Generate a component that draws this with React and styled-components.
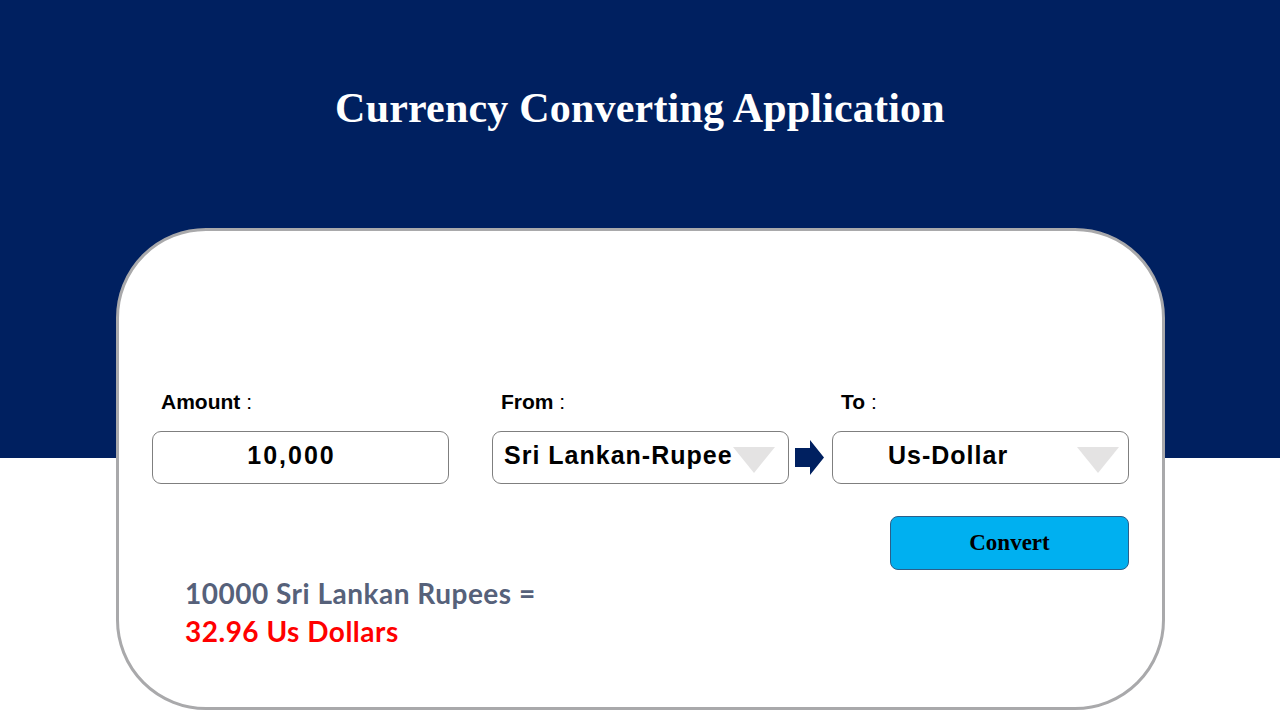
import React from "react";
import styled, { createGlobalStyle } from "styled-components";

const GlobalStyle = createGlobalStyle`
  html, body { margin: 0; padding: 0; }
  body { font-family: "Liberation Sans", Arial, sans-serif; background: #ffffff; }
  * { box-sizing: border-box; }
`;

const Page = styled.div`
  width: 1280px;
  height: 720px;
  overflow: hidden;
  background: linear-gradient(to bottom, #002060 0, #002060 458px, #ffffff 458px);
  display: flex;
  flex-direction: column;
`;

const Header = styled.header`
  height: 228px;
  display: flex;
  justify-content: center;
  padding-top: 84px;
`;

const Title = styled.h1`
  margin: 0;
  font-family: "Liberation Serif", "Times New Roman", serif;
  font-weight: 700;
  font-size: 42px;
  line-height: 48px;
  color: #ffffff;
  letter-spacing: 0.2px;
`;

const Card = styled.main`
  margin-left: 116px;
  width: 1049px;
  height: 482px;
  background: #ffffff;
  border: 3px solid #a9a9ab;
  border-radius: 90px;
  padding: 159px 33px 0 33px;
  display: flex;
  flex-direction: column;
`;

const Form = styled.div`
  display: grid;
  grid-template-columns: 297px 43px 297px 43px 297px;
  grid-template-rows: 24px 53px;
  row-gap: 17px;
`;

const Label = styled.label`
  grid-row: 1;
  grid-column: ${(p) => p.$col};
  padding-left: 9px;
  font-family: "Liberation Sans", Arial, sans-serif;
  font-size: 21px;
  line-height: 24px;
  color: #000000;
  b { font-weight: 700; }
  span { font-weight: 400; }
`;

const Field = styled.div`
  grid-row: 2;
  grid-column: ${(p) => p.$col};
  border: 1px solid #7f7f7f;
  border-radius: 9px;
  background: #ffffff;
  display: flex;
  align-items: center;
  justify-content: ${(p) => (p.$center ? "center" : "flex-start")};
  padding-left: ${(p) => p.$pad || 0}px;
  padding-right: ${(p) => (p.$center ? 18 : 0)}px;
  font-family: "Liberation Sans", Arial, sans-serif;
  font-weight: 700;
  font-size: 25px;
  letter-spacing: ${(p) => p.$spacing || 1}px;
  color: #000000;
  position: relative;
`;

const FieldText = styled.span`
  margin-top: -4px;
`;

const Caret = styled.span`
  position: absolute;
  right: ${(p) => p.$right}px;
  top: 15px;
  width: 0;
  height: 0;
  border-left: 21px solid transparent;
  border-right: 21px solid transparent;
  border-top: 26px solid #e4e3e3;
`;

const ArrowCell = styled.div`
  grid-row: 2;
  grid-column: 4;
  display: flex;
  align-items: center;
  padding-left: 6px;
  padding-top: 1px;
`;

const ButtonRow = styled.div`
  display: flex;
  justify-content: flex-end;
  margin-top: 32px;
`;

const ConvertButton = styled.button`
  width: 239px;
  height: 54px;
  background: #00b0f0;
  border: 1px solid #2b5f8a;
  border-radius: 8px;
  font-family: "Liberation Serif", "Times New Roman", serif;
  font-weight: 700;
  font-size: 23px;
  color: #000000;
  padding: 0;
  cursor: pointer;
`;

const Result = styled.div`
  margin-top: 4px;
  padding-left: 33px;
  font-family: Lato, "Open Sans", sans-serif;
  font-weight: 700;
  font-size: 28px;
  letter-spacing: 0.5px;
  line-height: 38px;
`;

const ResultLine = styled.div`
  color: ${(p) => p.$color};
`;

function BlockArrow() {
  return (
    <svg width="29" height="36" viewBox="0 0 29 36" aria-hidden="true">
      <polygon points="0,8 15,8 15,0 29,17.5 15,35 15,27 0,27" fill="#002060" />
    </svg>
  );
}

export default function App() {
  return (
    <>
      <GlobalStyle />
      <Page>
        <Header>
          <Title>Currency Converting Application</Title>
        </Header>
        <Card>
          <Form>
            <Label $col={1}>
              <b>Amount</b>
              <span> :</span>
            </Label>
            <Label $col={3}>
              <b>From</b>
              <span> :</span>
            </Label>
            <Label $col={5}>
              <b>To</b>
              <span> :</span>
            </Label>
            <Field $col={1} $center $spacing={2}>
              <FieldText>10,000</FieldText>
            </Field>
            <Field $col={3} $pad={11}>
              <FieldText>Sri Lankan-Rupee</FieldText>
              <Caret $right={13} />
            </Field>
            <ArrowCell>
              <BlockArrow />
            </ArrowCell>
            <Field $col={5} $pad={55}>
              <FieldText>Us-Dollar</FieldText>
              <Caret $right={9} />
            </Field>
          </Form>
          <ButtonRow>
            <ConvertButton type="button">Convert</ConvertButton>
          </ButtonRow>
          <Result>
            <ResultLine $color="#56617a">10000 Sri Lankan Rupees =</ResultLine>
            <ResultLine $color="#ff0000">32.96 Us Dollars</ResultLine>
          </Result>
        </Card>
      </Page>
    </>
  );
}
